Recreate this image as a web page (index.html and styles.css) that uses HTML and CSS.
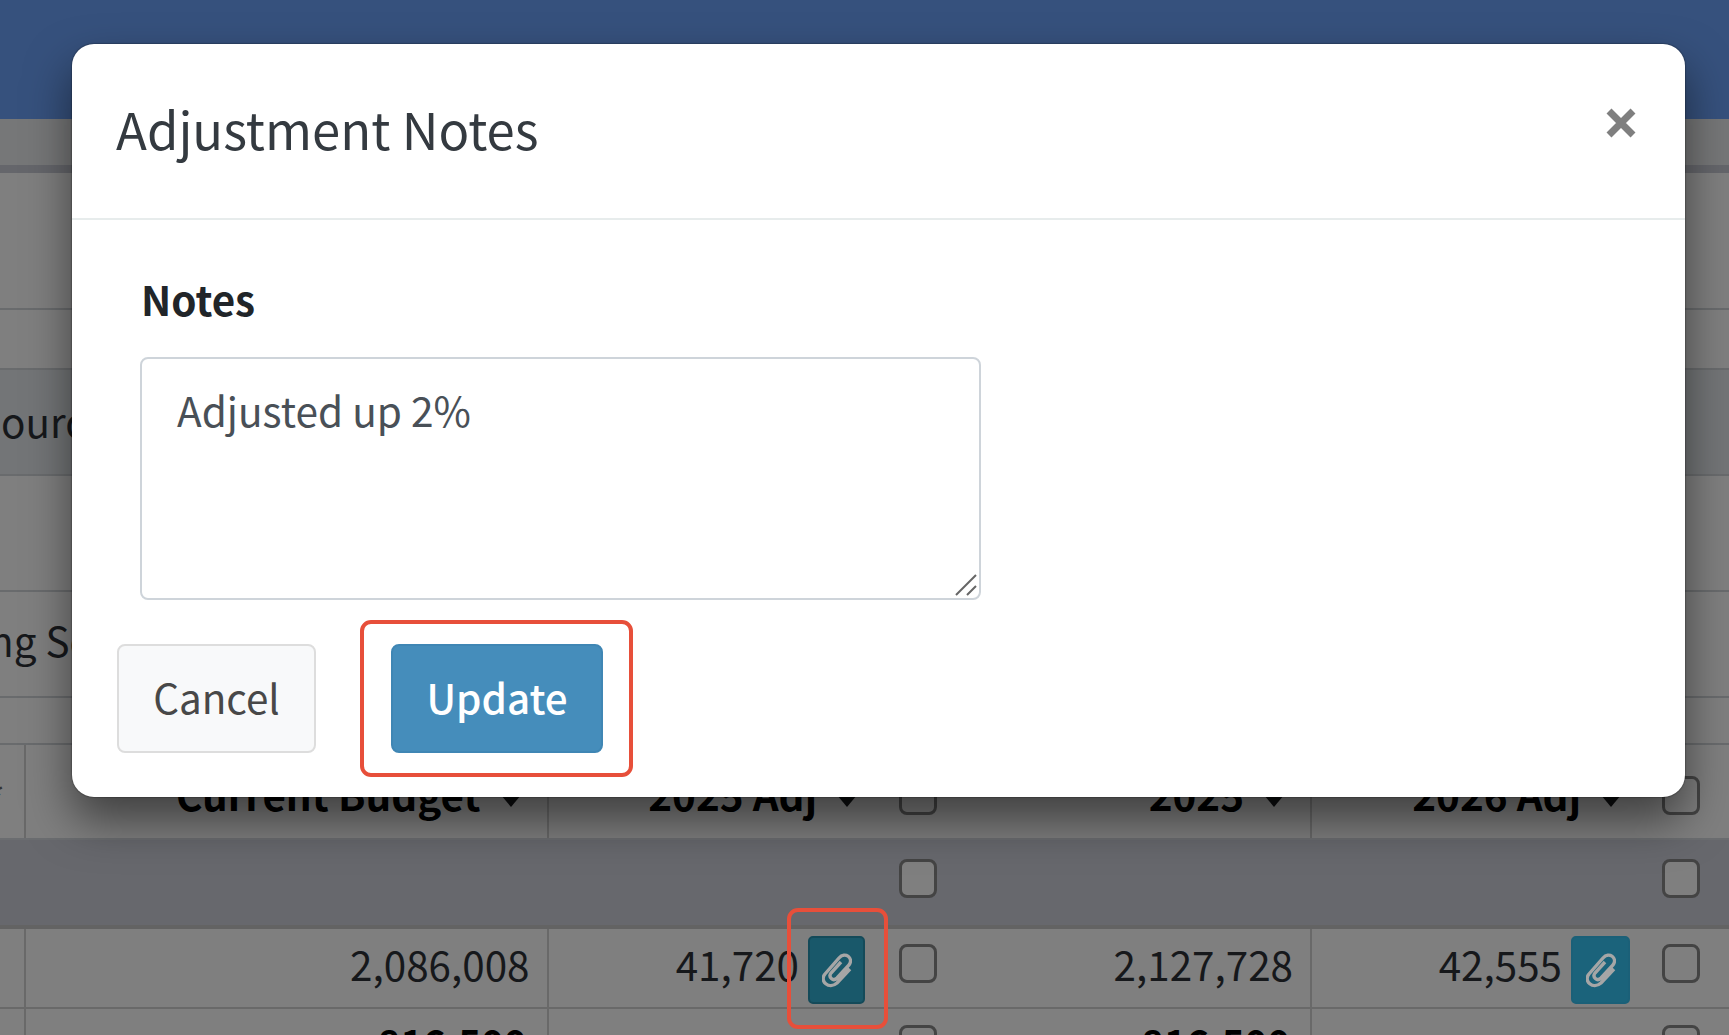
FILE: index.html
```html
<!doctype html>
<html lang="en">
<head>
    <meta charset="utf-8">
    <title>Adjustment Notes</title>
    <link rel="stylesheet" href="styles.css">
</head>
<body>
    <div class="page">
        <div class="navbar"></div>
        <div class="subbar"></div>
        <div class="filter filter-title"></div>
        <div class="filter filter-gap"></div>
        <div class="filter filter-head"><span>ource</span></div>
        <div class="filter filter-blank"></div>
        <div class="filter filter-value"><span>ng So</span></div>
        <div class="filter filter-end"></div>

        <div class="row row-head">
            <div class="cell line clip">*</div>
            <div class="cell line budget">Current Budget<i class="caret"></i></div>
            <div class="cell adj">2025 Adj<i class="caret"></i></div>
            <div class="cell check"><span class="box"></span></div>
            <div class="cell line year">2025<i class="caret"></i></div>
            <div class="cell adj">2026 Adj<i class="caret"></i></div>
            <div class="cell check"><span class="box"></span></div>
        </div>
        <div class="row row-group">
            <div class="cell group-label"></div>
            <div class="cell check"><span class="box"></span></div>
            <div class="cell"></div>
            <div class="cell"></div>
            <div class="cell check"><span class="box"></span></div>
        </div>
        <div class="row row-data">
            <div class="cell line"></div>
            <div class="cell line budget">2,086,008</div>
            <div class="cell adj">41,720
                <button class="clip-btn active"><svg viewBox="0 0 30 36"><path d="M28 17 L15 31 C7 38 -3 29 3 22 L17 6 C23 -1 32 6 27 13 L15 26 C11 30 6 25 9 21 L19 10"/></svg></button>
            </div>
            <div class="cell check"><span class="box"></span></div>
            <div class="cell line year">2,127,728</div>
            <div class="cell adj">42,555
                <button class="clip-btn"><svg viewBox="0 0 30 36"><path d="M28 17 L15 31 C7 38 -3 29 3 22 L17 6 C23 -1 32 6 27 13 L15 26 C11 30 6 25 9 21 L19 10"/></svg></button>
            </div>
            <div class="cell check"><span class="box"></span></div>
        </div>
        <div class="row row-total">
            <div class="cell line"></div>
            <div class="cell line budget">816,500</div>
            <div class="cell adj"></div>
            <div class="cell check"><span class="box"></span></div>
            <div class="cell line year">816,500</div>
            <div class="cell adj"></div>
            <div class="cell check"><span class="box"></span></div>
        </div>
    </div>

    <div class="modal">
        <div class="modal-header">
            <h4 class="modal-title">Adjustment Notes</h4>
            <button class="close"><svg viewBox="0 0 30 30"><path d="M3 3 L27 27 M27 3 L3 27"/></svg></button>
        </div>
        <div class="modal-body">
            <label class="notes-label" for="notes">Notes</label>
            <div class="notes-wrap">
                <div class="notes" id="notes">Adjusted up 2%</div>
                <svg class="grip" viewBox="0 0 22 22"><path d="M1 21 L21 1 M12 21 L21 12"/></svg>
            </div>
            <div class="buttons">
                <button class="btn btn-light">Cancel</button>
                <button class="btn btn-primary">Update</button>
            </div>
        </div>
    </div>

    <div class="mark mark-update"></div>
    <div class="mark mark-clip"></div>
</body>
</html>
```
FILE: styles.css
```css
* {
    box-sizing: border-box;
}

html, body {
    height: 1035px;
    margin: 0;
    overflow: hidden;
    background: #7f7f7f;
    color: #16181b;
    font-family: "Noto Sans CJK SC", "Noto Sans", sans-serif;
    font-size: 40.4px;
    line-height: 50px;
}

button {
    margin: 0;
    padding: 0;
    font: inherit;
}

.page {
    width: 1729px;
    height: 1035px;
    overflow: hidden;
}

.navbar {
    height: 119px;
    background: #36517d;
}

.subbar {
    height: 54px;
    background: #767778;
    border-bottom: 8px solid #65666b;
}

/* filter area behind the dialog */
.filter {
    border-bottom: 2px solid #696b6d;
    white-space: nowrap;
}

.filter-title { height: 137px; }
.filter-gap { height: 60px; }
.filter-head {
    height: 106px;
    padding: 26px 0 0 1px;
    background: #737577;
}
.filter-blank { height: 116px; }
.filter-value { height: 106px; padding-top: 23px; }
.filter-value span { margin-left: -11px; }
.filter-end { height: 47px; }

/* grid */
.row {
    display: grid;
    grid-template-columns: 26px 522.5px 326.5px 85px 352px 327px 84px;
}

.cell {
    display: flex;
    align-items: center;
    justify-content: flex-end;
    white-space: nowrap;
}

.line { border-right: 2px solid #696969; }
.budget, .year { padding-right: 17px; }
.adj { padding-right: 10px; }
.check { justify-content: center; }

.row-head {
    height: 93px;
    color: #000;
    font-weight: bold;
}

.row-head .cell { padding-top: 4px; }
.row-head .check { padding-top: 8px; }
.row-head .budget, .row-head .year { padding-right: 26px; }
.row-head .adj { padding-right: 18px; }
.row-head .clip {
    justify-content: flex-start;
    overflow: hidden;
    padding-top: 12px;
    color: #333;
    text-indent: -14px;
    font-weight: normal;
}

.caret {
    margin: 15px 0 0 20px;
    border: 10px solid transparent;
    border-top: 12px solid #0d0e0f;
    border-bottom: 0;
}

.row-group {
    height: 91px;
    background: #67686d;
    border-top: 2px solid #6b6d70;
    border-bottom: 4px solid #636363;
}

.row-group .cell, .row-data .cell, .row-total .cell { padding-bottom: 8px; }

.group-label { grid-column: span 3; }

.row-data {
    grid-template-rows: 78px;
    height: 80px;
    border-bottom: 2px solid #696969;
}

.row-total {
    grid-template-rows: 80px;
    height: 80px;
    color: #000;
    font-size: 38.5px;
    font-weight: bold;
}

.row-total .line {
    padding-right: 20px;
    padding-bottom: 17px;
}

.row-total .check { padding-bottom: 10px; }

.box {
    width: 38px;
    height: 39px;
    background: #7f7f7f;
    border: 3px solid #444;
    border-radius: 8px;
}

.row-head .box { background: transparent; }

.row-data .check { padding-bottom: 10px; }

.clip-btn {
    display: flex;
    align-items: center;
    align-self: flex-start;
    justify-content: center;
    flex: none;
    width: 59px;
    height: 68px;
    margin: 7px 0 0 9px;
    background: #1b637b;
    border: 2px solid #1b6078;
    border-radius: 5px;
}

.row-data .adj { padding-right: 9px; }

.clip-btn.active {
    width: 57px;
    margin-right: 1px;
    background: #19586a;
    border-color: #144a59;
}

.clip-btn svg {
    width: 30px;
    height: 36px;
    fill: none;
    stroke: #a6a6a6;
    stroke-width: 3.4;
}

/* dialog */
.modal {
    position: absolute;
    top: 44px;
    left: 72px;
    width: 1613px;
    height: 753px;
    background: #fff;
    border-radius: 22px;
    box-shadow: 0 23px 46px rgba(0, 0, 0, .5), 0 0 1px 1px rgba(0, 0, 0, .2);
}

.modal-header {
    display: flex;
    justify-content: space-between;
    height: 176px;
    padding: 48px 49px 0 44px;
    border-bottom: 2px solid #e7ecec;
}

.modal-title {
    margin: 0;
    color: #343a40;
    font-size: 50.8px;
    font-weight: normal;
    line-height: 72px;
}

.close {
    width: 30px;
    height: 30px;
    margin-top: 16px;
    background: none;
    border: 0;
}

.close svg {
    display: block;
    stroke: #7f7f7f;
    stroke-width: 7;
}

.modal-body {
    padding: 54px 45px 0;
}

.notes-label {
    display: block;
    height: 83px;
    padding-left: 24px;
    color: #212529;
    font-size: 40.4px;
    font-weight: bold;
}

.notes-wrap {
    position: relative;
    width: 841px;
    margin-left: 23px;
}

.notes {
    height: 243px;
    padding: 26px 35px;
    color: #495057;
    font-size: 40.6px;
    border: 2px solid #ced4da;
    border-radius: 8px;
}

.grip {
    position: absolute;
    right: 4px;
    bottom: 4px;
    width: 22px;
    height: 22px;
    stroke: #666;
    stroke-width: 2;
}

.buttons {
    display: flex;
    gap: 75px;
    margin-top: 44px;
}

.btn {
    width: 199px;
    height: 109px;
    padding-bottom: 4px;
    border-radius: 8px;
}

.btn-light {
    color: #484848;
    background: #f8f9fa;
    border: 2px solid #ddd;
}

.btn-primary {
    width: 212px;
    color: #fff;
    font-weight: 500;
    background: #458dbb;
    border: 2px solid #3f86b4;
}

/* callouts */
.mark {
    position: absolute;
    border: 4px solid #e74f3a;
    border-radius: 11px;
}

.mark-update {
    top: 620px;
    left: 360px;
    width: 273px;
    height: 157px;
}

.mark-clip {
    top: 908px;
    left: 787px;
    width: 101px;
    height: 121px;
}
```
